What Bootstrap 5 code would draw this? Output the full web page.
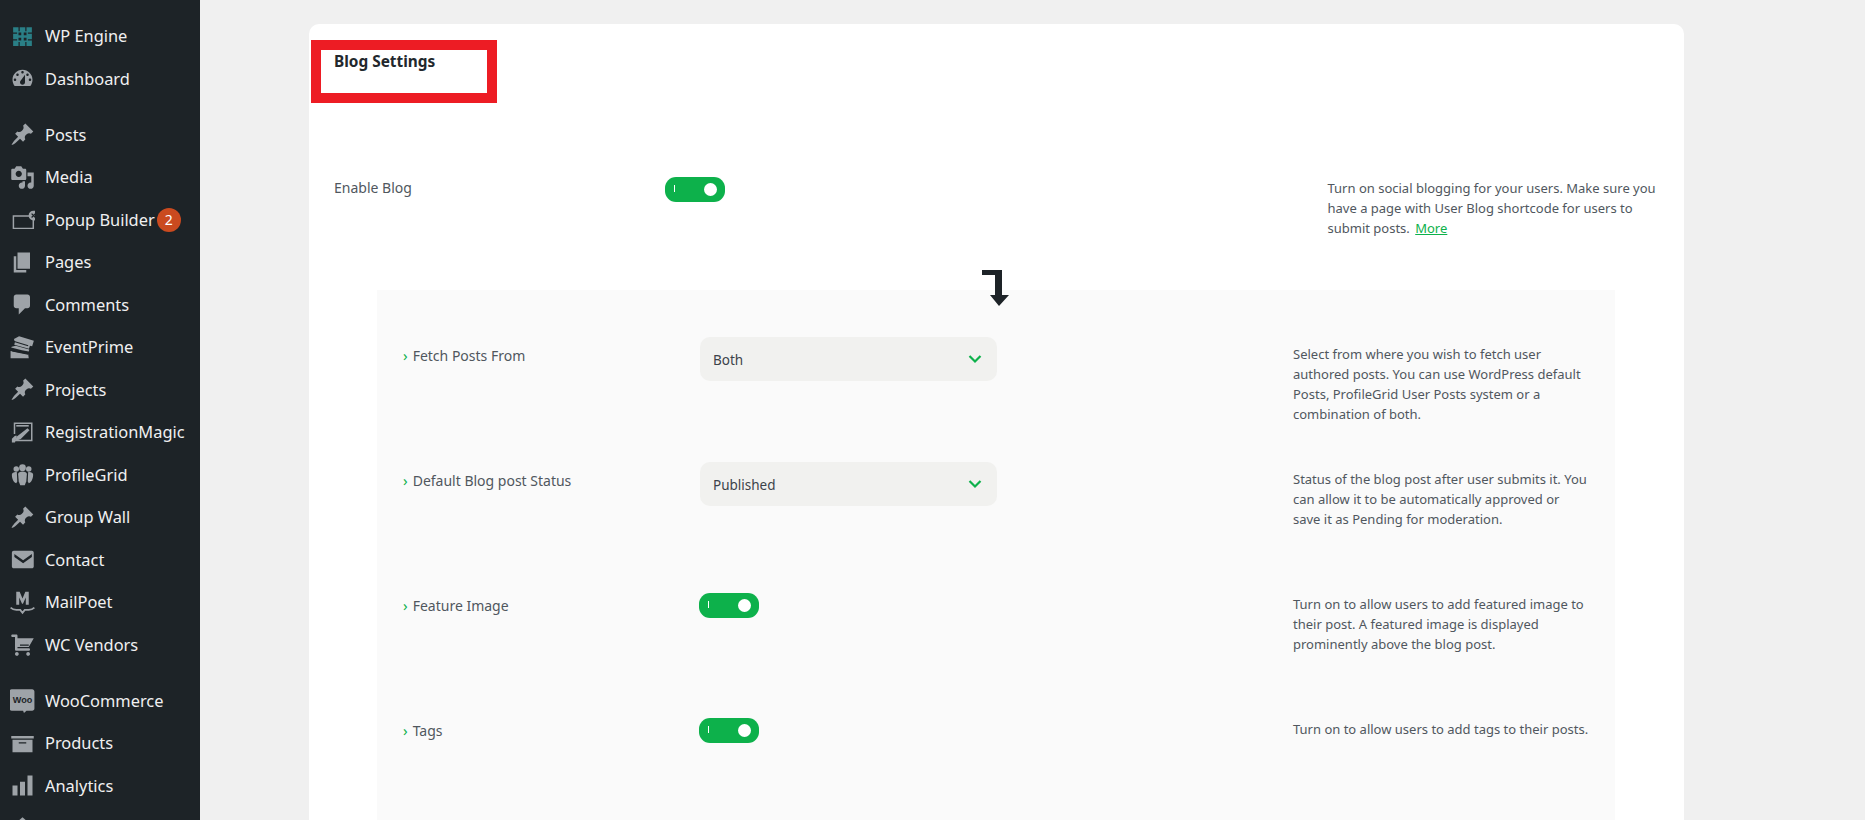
<!DOCTYPE html>
<html lang="en">
<head>
<meta charset="utf-8">
<title>Blog Settings</title>
<link href="https://cdn.jsdelivr.net/npm/bootstrap@5.3.0/dist/css/bootstrap.min.css" rel="stylesheet">
<style>
html,body{height:820px;overflow:hidden;background:#f0f0f0;}
body{font-family:"Noto Sans","Liberation Sans",sans-serif;font-size:13px;line-height:20px;color:#50575e;}
.wp-side{width:200px;height:820px;flex:none;background:#1d2327;padding-top:15px;overflow:hidden;}
.wp-side .nav-link{height:42.5px;padding:0 0 0 10px;display:flex;align-items:center;color:#f0f0f1;font-size:16.4px;white-space:nowrap;}
.wp-side .nav-link svg{width:25px;height:25px;flex:none;margin-right:10px;fill:#9ea3a8;}
.wp-gap{margin-top:13.500px;}
.wp-count{width:24px;height:24px;border-radius:50%;background:#ca4a1f;color:#fff;font-size:14px;line-height:24px;text-align:center;margin-left:2px;}
.wp-main{margin-left:109px;margin-top:24px;width:1375px;}
.set-card{position:relative;background:#fff;border-radius:10px 10px 0 0;height:796px;padding:28px 0 0 25px;}
.set-title{font-size:15.400px;font-weight:700;color:#23282d;margin:0;line-height:20px;}
.red-frame{position:absolute;left:2px;top:16px;width:186px;height:63px;border:10px solid #ed1c24;}
.top-row{margin-top:105px;height:113px;font-size:13px;}
.top-label{width:331px;flex:none;font-size:14px;padding-top:1px;}
.top-help{margin-left:602.500px;white-space:nowrap;padding-top:1px;}
.top-help a{color:#0db14b;margin-left:2px;}
.sub-panel{position:relative;background:#fafafa;margin-left:43px;width:1238px;height:530px;padding:47px 0 0 26px;}
.sub-row{height:125px;}
.sub-label{width:297px;flex:none;padding-top:8px;font-size:14px;}
.sub-label::before{content:"›";color:#0db14b;font-size:15px;margin-right:5px;}
.sub-ctrl{width:593px;flex:none;}
.sub-help{padding-top:7px;white-space:nowrap;}
.pick{width:297px;height:44px;background-color:#f1f1ef;border:0;border-radius:10px;font-size:13.500px;color:#3c434a;padding:2px 40px 0 13px;
background-image:url("data:image/svg+xml,%3Csvg xmlns='http://www.w3.org/2000/svg' viewBox='0 0 14 10'%3E%3Cpath d='M1.5 2l5.5 5.5L12.500 2' fill='none' stroke='%230db14b' stroke-width='2.200'/%3E%3C/svg%3E");
background-size:14px 10px;background-position:right 15px center;}
.pick:focus{box-shadow:none;background-color:#f1f1ef;}
.tog.form-check-input{width:60px;height:25px;margin:0;border:0;border-radius:11px;background-color:#0db14b;float:none;
background-image:url("data:image/svg+xml,%3Csvg xmlns='http://www.w3.org/2000/svg' viewBox='0 0 60 25'%3E%3Crect x='9' y='8' width='1' height='7' fill='%23fff'/%3E%3Ccircle cx='45.500' cy='12.500' r='6.500' fill='%23fff'/%3E%3C/svg%3E");
background-size:60px 25px;background-position:0 0;}
.tog-wrap{padding-top:6px;}
.tog-shift{margin-left:-1px!important;}
.flow-arrow{position:absolute;left:605px;top:-20px;width:28px;height:37px;fill:#1d2327;}
</style>
</head>
<body>
<div class="d-flex">
<nav class="wp-side">
<ul class="nav flex-column">
<li class="nav-item"><a class="nav-link" href="#"><svg viewBox="0 0 20 20"><g fill="#2a7f86"><path d="M2.500 2.500h4.300v3.200h1v-3.200h4.400v3.200h1v-3.200h4.300v4.300h-3.200v1h3.200v4.400h-3.200v1h3.200v4.300h-4.300v-3.200h-1v3.200H7.800v-3.200h-1v3.200H2.500v-4.300h3.200v-1H2.500V7.800h3.200v-1H2.500zM6.800 6.800v2.200h2.200V6.800zm4.200 0v2.200h2.200V6.800zM6.800 11v2.200h2.200V11zm4.200 0v2.200h2.200V11z" fill-rule="evenodd"/></g></svg>WP Engine</a></li>
<li class="nav-item"><a class="nav-link" href="#"><svg viewBox="0 0 20 20"><path d="M3.760 16h12.480c1.100-1.370 1.760-3.110 1.760-5 0-4.420-3.580-8-8-8s-8 3.580-8 8c0 1.890.660 3.630 1.760 5zM10 4c.550 0 1 .450 1 1s-.450 1-1 1-1-.450-1-1 .450-1 1-1zM6 6c.550 0 1 .450 1 1s-.450 1-1 1-1-.450-1-1 .450-1 1-1zm8 0c.550 0 1 .450 1 1s-.450 1-1 1-1-.450-1-1 .450-1 1-1zm-5.370 5.550L12 7v6c0 1.100-.900 2-2 2s-2-.900-2-2c0-.570.240-1.080.630-1.450zM4 10c.550 0 1 .450 1 1s-.450 1-1 1-1-.450-1-1 .450-1 1-1zm12 0c.550 0 1 .450 1 1s-.450 1-1 1-1-.450-1-1 .450-1 1-1z" fill-rule="evenodd"/></svg>Dashboard</a></li>
<li class="nav-item wp-gap"><a class="nav-link" href="#"><svg viewBox="0 0 20 20"><path d="M10.440 3.020l1.820-1.820 6.360 6.350-1.830 1.820c-1.050-.680-2.480-.570-3.410.360l-.750.750c-.920.930-1.040 2.350-.350 3.410l-1.830 1.820-2.410-2.410-2.800 2.790c-.420.420-3.380 2.710-3.800 2.290s1.860-3.390 2.280-3.810l2.790-2.790L4.100 9.360l1.830-1.820c1.050.690 2.480.570 3.400-.360l.750-.750c.930-.920 1.050-2.350.36-3.410z"/></svg>Posts</a></li>
<li class="nav-item"><a class="nav-link" href="#"><svg viewBox="0 0 20 20"><path d="M13 11V4c0-.550-.450-1-1-1h-1.670L9 1H5L3.670 3H2c-.550 0-1 .450-1 1v7c0 .550.450 1 1 1h10c.550 0 1-.450 1-1zM7 4.500c1.380 0 2.500 1.120 2.500 2.500S8.380 9.500 7 9.500 4.500 8.380 4.500 7 5.620 4.500 7 4.500zM14 6h5v10.500c0 1.380-1.120 2.500-2.500 2.500S14 17.880 14 16.500s1.120-2.500 2.500-2.500c.170 0 .340.020.500.050V9h-3V6zm-4 8.050V13h2v3.500c0 1.380-1.120 2.500-2.500 2.500S7 17.880 7 16.500 8.120 14 9.500 14c.170 0 .340.020.500.050z"/></svg>Media</a></li>
<li class="nav-item"><a class="nav-link" href="#"><svg viewBox="0 0 22 22"><path d="M3 8h17.500v10.800H3z" fill="none" stroke="#9ea3a8" stroke-width="1.300"/><circle cx="20.700" cy="7.500" r="4.300" fill="#9ea3a8"/><path d="M19 5.800l3.400 3.400m0-3.400L19 9.200" stroke="#1d2327" stroke-width="1.100"/></svg><span>Popup Builder</span><span class="wp-count">2</span></a></li>
<li class="nav-item"><a class="nav-link" href="#"><svg viewBox="0 0 20 20"><path d="M6 15V2h10v13H6zm-1 1h8v2H3V5h2v11z"/></svg>Pages</a></li>
<li class="nav-item"><a class="nav-link" href="#"><svg viewBox="0 0 20 20"><path d="M5 2h9c1.100 0 2 .900 2 2v7c0 1.100-.900 2-2 2h-2l-5 5v-5H5c-1.100 0-2-.900-2-2V4c0-1.100.900-2 2-2z"/></svg>Comments</a></li>
<li class="nav-item"><a class="nav-link" href="#"><svg viewBox="0 0 22 22"><path d="M3.500 3.500L8 1l13 4-1.500 5-2-.6-.8 2.600L3.700 8.500l.6-2z"/><path d="M1 11l9.500 2.500 6 1 .5-1.800-12-3.200-3.500.8zM.5 14l15.500 3 .5 3.500H.5z"/><path d="M3 5.500l13 4M2 14l14 3" stroke="#1d2327" stroke-width="1" fill="none"/></svg>EventPrime</a></li>
<li class="nav-item"><a class="nav-link" href="#"><svg viewBox="0 0 20 20"><path d="M10.440 3.020l1.820-1.820 6.360 6.350-1.830 1.820c-1.050-.680-2.480-.570-3.410.360l-.750.750c-.920.930-1.040 2.350-.350 3.410l-1.830 1.820-2.410-2.410-2.800 2.790c-.420.420-3.380 2.710-3.800 2.290s1.860-3.390 2.280-3.810l2.790-2.790L4.100 9.360l1.830-1.820c1.050.690 2.480.570 3.400-.360l.750-.750c.930-.920 1.050-2.350.36-3.410z"/></svg>Projects</a></li>
<li class="nav-item"><a class="nav-link" href="#"><svg viewBox="0 0 20 20"><path d="M3 2h15v15H4v-1.200h12.800V3.200H4.200v8H3z"/><path d="M5 4h10v1.300H5z"/><path d="M14 6.500l1.600 1.600-7 7-3 1.200-1.400-.2 1-2.700z"/><path d="M1.500 15l2.500-2.500h1.500L4 18H1.500z"/></svg>RegistrationMagic</a></li>
<li class="nav-item"><a class="nav-link" href="#"><svg viewBox="0 0 20 20"><circle cx="5" cy="5.500" r="2.200"/><circle cx="15" cy="5.500" r="2.200"/><circle cx="10" cy="4.500" r="2.700"/><path d="M6.500 9.500c0-1.200 1.500-2 3.500-2s3.500.800 3.500 2l-.5 6-1.200 3H8.200L7 15.500z"/><path d="M1.500 10c0-1.300 1.500-2 3-2 .500 0 .800.100 1 .200l.3 7.300-.800 1.500C2.500 16 1.500 13 1.500 10zm17 0c0-1.300-1.500-2-3-2-.500 0-.800.100-1 .200l-.3 7.300.800 1.500c2.500-1 3.500-4 3.500-7z"/></svg>ProfileGrid</a></li>
<li class="nav-item"><a class="nav-link" href="#"><svg viewBox="0 0 20 20"><path d="M10.440 3.020l1.820-1.820 6.360 6.350-1.830 1.820c-1.050-.680-2.480-.570-3.410.360l-.750.750c-.920.930-1.040 2.350-.350 3.410l-1.830 1.820-2.410-2.410-2.800 2.790c-.420.420-3.380 2.710-3.800 2.290s1.860-3.390 2.280-3.810l2.790-2.790L4.100 9.360l1.830-1.820c1.050.690 2.480.570 3.400-.360l.750-.750c.930-.920 1.050-2.350.36-3.410z"/></svg>Group Wall</a></li>
<li class="nav-item"><a class="nav-link" href="#"><svg viewBox="0 0 20 20"><path d="M19 15.500v-11c0-.830-.670-1.500-1.500-1.500H3c-.830 0-1.500.670-1.500 1.500v11c0 .830.670 1.500 1.500 1.500h14.500c.830 0 1.500-.670 1.500-1.500zM3.500 5.500l7 5 7-5V8l-7 5-7-5z" fill-rule="evenodd"/></svg>Contact</a></li>
<li class="nav-item"><a class="nav-link" href="#"><svg viewBox="0 0 22 22"><path d="M5.500 13V1.500h3l2.500 6 2.500-6h3V13h-2.600V6.500L11.400 12h-.8L8.100 6.500V13z"/><path d="M.5 15.500c1.500 1.500 3 2 5 2h3.500l2 2.500 2-2.500h3.500c2 0 3.500-.500 5-2" fill="none" stroke="#9ea3a8" stroke-width="1.600"/></svg>MailPoet</a></li>
<li class="nav-item"><a class="nav-link" href="#"><svg viewBox="0 0 20 20"><path d="M6 13h9c.550 0 1 .450 1 1s-.450 1-1 1H5c-.550 0-1-.450-1-1V4H2c-.550 0-1-.450-1-1s.450-1 1-1h3c.550 0 1 .450 1 1v2h13l-4 7H6v1zm-.500 3c.830 0 1.500.670 1.500 1.500S6.330 19 5.500 19 4 18.330 4 17.500 4.670 16 5.500 16zm9 0c.830 0 1.500.670 1.500 1.500s-.670 1.500-1.500 1.500-1.500-.670-1.500-1.500.670-1.500 1.500-1.500z"/><path d="M8 10.500h7" stroke="#1d2327" stroke-width="1"/></svg>WC Vendors</a></li>
<li class="nav-item wp-gap"><a class="nav-link" href="#"><svg viewBox="0 0 22 22"><path d="M2.500 1h17c1.100 0 2 .900 2 2v15c0 1.100-.900 2-2 2h-5l-2.200 2-.8-2h-10c-1.100 0-2-.900-2-2V3c0-1.100.900-2 2-2z"/><text x="11" y="13.500" text-anchor="middle" font-size="8" font-weight="700" fill="#1d2327" font-family="Liberation Sans, sans-serif">Woo</text></svg>WooCommerce</a></li>
<li class="nav-item"><a class="nav-link" href="#"><svg viewBox="0 0 20 20"><path d="M19 4v2H1V4h18zM2 7h16v10H2V7zm11 3V9H7v1h6z"/></svg>Products</a></li>
<li class="nav-item"><a class="nav-link" href="#"><svg viewBox="0 0 20 20"><path d="M18 18V2h-4v16h4zm-6 0V7H8v11h4zm-6 0v-8H2v8h4z"/></svg>Analytics</a></li>
<li class="nav-item"><a class="nav-link" href="#" aria-label="Marketing"><svg viewBox="0 0 20 20"><path d="M10 1l8 7v11H2V8z"/></svg></a></li>
</ul>
</nav>
<main class="wp-main">
<section class="set-card">
<div class="red-frame"></div>
<h1 class="set-title">Blog Settings</h1>
<div class="top-row d-flex">
<div class="top-label">Enable Blog</div>
<input class="form-check-input tog" type="checkbox" role="switch" checked aria-label="Enable Blog">
<div class="top-help">Turn on social blogging for your users. Make sure you<br>have a page with User Blog shortcode for users to<br>submit posts. <a href="#">More</a></div>
</div>
<div class="sub-panel">
<svg class="flow-arrow" viewBox="0 0 28 37"><path d="M0 0h20v25h7L17 36 8 25h5V5H0z"/></svg>
<div class="sub-row d-flex">
<div class="sub-label">Fetch Posts From</div>
<div class="sub-ctrl"><select class="form-select pick" aria-label="Fetch Posts From"><option>Both</option></select></div>
<div class="sub-help">Select from where you wish to fetch user<br>authored posts. You can use WordPress default<br>Posts, ProfileGrid User Posts system or a<br>combination of both.</div>
</div>
<div class="sub-row d-flex">
<div class="sub-label">Default Blog post Status</div>
<div class="sub-ctrl"><select class="form-select pick" aria-label="Default Blog post Status"><option>Published</option></select></div>
<div class="sub-help">Status of the blog post after user submits it. You<br>can allow it to be automatically approved or<br>save it as Pending for moderation.</div>
</div>
<div class="sub-row d-flex">
<div class="sub-label">Feature Image</div>
<div class="sub-ctrl tog-wrap"><input class="form-check-input tog tog-shift" type="checkbox" role="switch" checked aria-label="Feature Image"></div>
<div class="sub-help">Turn on to allow users to add featured image to<br>their post. A featured image is displayed<br>prominently above the blog post.</div>
</div>
<div class="sub-row d-flex">
<div class="sub-label">Tags</div>
<div class="sub-ctrl tog-wrap"><input class="form-check-input tog tog-shift" type="checkbox" role="switch" checked aria-label="Tags"></div>
<div class="sub-help">Turn on to allow users to add tags to their posts.</div>
</div>
</div>
</section>
</main>
</div>
<script src="https://cdn.jsdelivr.net/npm/bootstrap@5.3.0/dist/js/bootstrap.bundle.min.js"></script>
</body>
</html>
